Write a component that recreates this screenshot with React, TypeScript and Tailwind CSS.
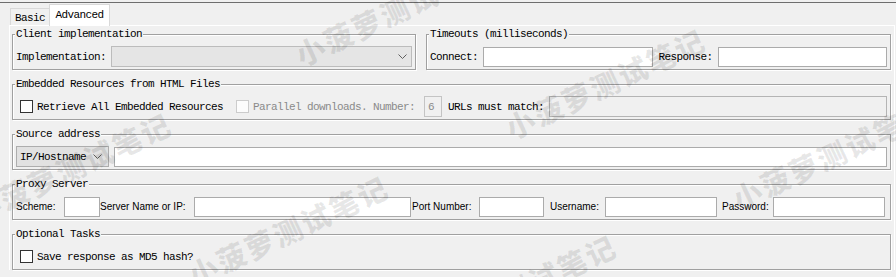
import type { ReactNode } from "react";

function Chevron({ className }: { className?: string }) {
  return (
    <svg className={className} width="9" height="5" viewBox="0 0 9 5" fill="none">
      <polyline points="0.5,0.5 4.5,4.5 8.5,0.5" stroke="#606060" strokeWidth="1" />
    </svg>
  );
}

function Group({ title, className = "", children }: { title: string; className?: string; children: ReactNode }) {
  return (
    <fieldset
      className={`min-w-0 m-0 border border-[#a0a0a0] shadow-[1px_1px_0_#ffffff,inset_1px_1px_0_#ffffff] pl-[3px] pr-[3px] pt-[6px] pb-[2px] ${className}`}
    >
      <legend className="-ml-px px-px bg-[#f0f0f0] leading-[12px]">{title}</legend>
      <div className="flex h-[21px] items-center">{children}</div>
    </fieldset>
  );
}

function Field({ className = "" }: { className?: string }) {
  return <input className={`h-[20px] border border-[#ababab] bg-white outline-none ${className}`} />;
}

function Check({ disabled }: { disabled?: boolean }) {
  return (
    <span
      className={`inline-block w-[13px] h-[13px] shrink-0 border ${
        disabled ? "border-[#cccccc] bg-[#fcfcfc]" : "border-[#333333] bg-white"
      }`}
    />
  );
}

const marks = [
  "left-[71px] top-[167px]",
  "left-[395px] top-[10px]",
  "left-[288px] top-[230px]",
  "left-[605px] top-[83px]",
  "left-[516px] top-[289px]",
  "left-[832px] top-[154px]",
];

export default function App() {
  return (
    <div className="relative w-[896px] h-[277px] overflow-hidden bg-[#f0f0f0] text-black font-['Liberation_Mono',monospace] text-[11px] tracking-[-0.6px] leading-[12px]">
      <div className="h-[3px] border-b border-[#6e6e6e]" />

      {/* tabs */}
      <div className="flex h-[22px] items-end pl-[10px]">
        <div className="flex h-[17px] w-[40px] items-center justify-center border border-b-0 border-[#d9d9d9] bg-[#f0f0f0] pt-px">
          Basic
        </div>
        <div className="relative z-10 -ml-px -mb-px flex h-[22px] w-[61px] items-center justify-center border border-b-0 border-[#d9d9d9] bg-white pb-[2px]">
          Advanced
        </div>
      </div>

      {/* panel */}
      <div className="ml-[9px] w-[886px] border-x border-t border-white pl-[2px] pr-[3px] pt-[2px] flex flex-col gap-2">
        <div className="flex">
          <Group title="Client implementation" className="w-[404px] pr-[2px]">
            <span className="w-[95px] shrink-0">Implementation:</span>
            <div className="flex h-[21px] flex-1 items-center justify-end border border-[#bcbcbc] bg-[#e5e5e5] pr-[4px]">
              <Chevron />
            </div>
          </Group>
          <Group title="Timeouts (milliseconds)" className="ml-[10px] flex-1">
            <span className="w-[53px] shrink-0">Connect:</span>
            <Field className="flex-1 min-w-0" />
            <span className="ml-[6px] w-[59px] shrink-0">Response:</span>
            <Field className="flex-1 min-w-0" />
          </Group>
        </div>

        <Group title="Embedded Resources from HTML Files">
          <span className="ml-[4px] flex items-center">
            <Check />
          </span>
          <span className="ml-[4px]">Retrieve All Embedded Resources</span>
          <span className="ml-[13px] flex items-center">
            <Check disabled />
          </span>
          <span className="ml-[4px] text-[#8a8a8a]">Parallel downloads. Number:</span>
          <div className="ml-[9px] flex h-[21px] w-[18px] items-center border border-[#c4c4c4] pl-[3px] text-[#8a8a8a]">6</div>
          <span className="ml-[6px]">URLs must match:</span>
          <div className="ml-[5px] h-[21px] flex-1 border border-[#b4b4b4] bg-[#f0f0f0]" />
        </Group>

        <Group title="Source address">
          <div className="flex h-[21px] w-[93px] shrink-0 items-center justify-between border border-[#adadad] bg-[#e1e1e1] pl-[3px] pr-[6px]">
            <span>IP/Hostname</span>
            <Chevron />
          </div>
          <Field className="ml-[5px] flex-1 min-w-0" />
        </Group>

        <Group title="Proxy Server">
          <div className="flex items-center font-['Liberation_Sans',Arial,sans-serif] text-[10px] tracking-normal">
            <span className="w-[48px] shrink-0">Scheme:</span>
            <Field className="w-[36px]" />
            <span className="w-[94px] shrink-0">Server Name or IP:</span>
            <Field className="w-[217px]" />
            <span className="ml-[1px] w-[67px] shrink-0">Port Number:</span>
            <Field className="w-[65px]" />
            <span className="ml-[6px] w-[55px] shrink-0">Username:</span>
            <Field className="w-[112px]" />
            <span className="ml-[5px] w-[51px] shrink-0">Password:</span>
            <Field className="w-[112px]" />
          </div>
        </Group>

        <Group title="Optional Tasks">
          <span className="ml-[4px] flex items-center">
            <Check />
          </span>
          <span className="ml-[4px]">Save response as MD5 hash?</span>
        </Group>
      </div>

      {/* watermark */}
      <div className="pointer-events-none absolute inset-0">
        {marks.map((m) => (
          <span
            key={m}
            className={`absolute ${m} -translate-x-1/2 -translate-y-1/2 -rotate-[25deg] whitespace-nowrap font-['Noto_Sans_CJK_SC',sans-serif] text-[29px] font-black tracking-[2px] leading-none text-black/[0.09]`}
          >
            小菠萝测试笔记
          </span>
        ))}
      </div>
    </div>
  );
}
